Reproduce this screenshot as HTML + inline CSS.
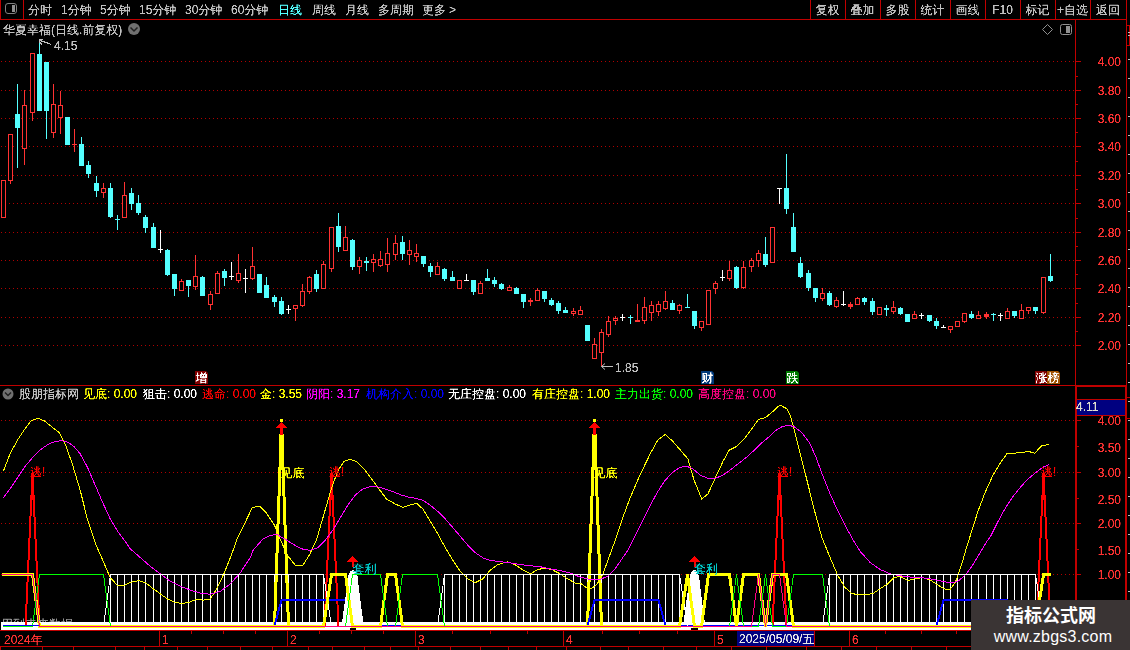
<!DOCTYPE html>
<html><head><meta charset="utf-8"><title>chart</title>
<style>html,body{margin:0;padding:0;background:#000;overflow:hidden}body{width:1130px;height:650px;position:relative}svg text{font-family:"Liberation Sans","WenQuanYi Zen Hei",sans-serif;font-size:12px}</style>
</head><body>
<svg width="1130" height="650" viewBox="0 0 1130 650" style="position:absolute;left:0;top:0">
<rect width="1130" height="650" fill="#000"/>
<defs><filter id="sh" x="-5%" y="-20%" width="110%" height="140%" color-interpolation-filters="sRGB"><feComponentTransfer><feFuncA type="linear" slope="2.2" intercept="-0.35"/></feComponentTransfer></filter></defs>
<g shape-rendering="crispEdges">
<line x1="1" x2="1075" y1="61.5" y2="61.5" stroke="#B00000" stroke-width="1" stroke-dasharray="1 3"/>
<line x1="1" x2="1075" y1="90.5" y2="90.5" stroke="#B00000" stroke-width="1" stroke-dasharray="1 3"/>
<line x1="1" x2="1075" y1="118.5" y2="118.5" stroke="#B00000" stroke-width="1" stroke-dasharray="1 3"/>
<line x1="1" x2="1075" y1="146.5" y2="146.5" stroke="#B00000" stroke-width="1" stroke-dasharray="1 3"/>
<line x1="1" x2="1075" y1="175.5" y2="175.5" stroke="#B00000" stroke-width="1" stroke-dasharray="1 3"/>
<line x1="1" x2="1075" y1="203.5" y2="203.5" stroke="#B00000" stroke-width="1" stroke-dasharray="1 3"/>
<line x1="1" x2="1075" y1="232.5" y2="232.5" stroke="#B00000" stroke-width="1" stroke-dasharray="1 3"/>
<line x1="1" x2="1075" y1="260.5" y2="260.5" stroke="#B00000" stroke-width="1" stroke-dasharray="1 3"/>
<line x1="1" x2="1075" y1="288.5" y2="288.5" stroke="#B00000" stroke-width="1" stroke-dasharray="1 3"/>
<line x1="1" x2="1075" y1="317.5" y2="317.5" stroke="#B00000" stroke-width="1" stroke-dasharray="1 3"/>
<line x1="1" x2="1075" y1="345.5" y2="345.5" stroke="#B00000" stroke-width="1" stroke-dasharray="1 3"/>
<line x1="1" x2="1075" y1="420.5" y2="420.5" stroke="#B00000" stroke-width="1" stroke-dasharray="1 3"/>
<line x1="1" x2="1075" y1="472.5" y2="472.5" stroke="#B00000" stroke-width="1" stroke-dasharray="1 3"/>
<line x1="1" x2="1075" y1="523.5" y2="523.5" stroke="#B00000" stroke-width="1" stroke-dasharray="1 3"/>
<line x1="1" x2="1075" y1="574.5" y2="574.5" stroke="#B00000" stroke-width="1" stroke-dasharray="1 3"/>
<rect x="3" y="180" width="1" height="0" fill="#FF3232"/>
<rect x="3" y="217" width="1" height="1" fill="#FF3232"/>
<rect x="1.5" y="180.5" width="4" height="37" fill="#000" stroke="#FF3232" stroke-width="1"/>
<rect x="10" y="134" width="1" height="0" fill="#FF3232"/>
<rect x="10" y="180" width="1" height="4" fill="#FF3232"/>
<rect x="8.5" y="134.5" width="4" height="46" fill="#000" stroke="#FF3232" stroke-width="1"/>
<rect x="17" y="84" width="1" height="84" fill="#54FFFF"/>
<rect x="15" y="114" width="5" height="14" fill="#54FFFF"/>
<rect x="24" y="90" width="1" height="15" fill="#FF3232"/>
<rect x="24" y="148" width="1" height="17" fill="#FF3232"/>
<rect x="22.5" y="105.5" width="4" height="43" fill="#000" stroke="#FF3232" stroke-width="1"/>
<rect x="32" y="53" width="1" height="0" fill="#FF3232"/>
<rect x="32" y="112" width="1" height="9" fill="#FF3232"/>
<rect x="30.5" y="53.5" width="4" height="59" fill="#000" stroke="#FF3232" stroke-width="1"/>
<rect x="39" y="40" width="1" height="71" fill="#54FFFF"/>
<rect x="37" y="54" width="5" height="57" fill="#54FFFF"/>
<rect x="46" y="62" width="1" height="77" fill="#54FFFF"/>
<rect x="44" y="62" width="5" height="49" fill="#54FFFF"/>
<rect x="53" y="84" width="1" height="20" fill="#FF3232"/>
<rect x="53" y="132" width="1" height="6" fill="#FF3232"/>
<rect x="51.5" y="104.5" width="4" height="28" fill="#000" stroke="#FF3232" stroke-width="1"/>
<rect x="60" y="91" width="1" height="14" fill="#FF3232"/>
<rect x="60" y="117" width="1" height="17" fill="#FF3232"/>
<rect x="58.5" y="105.5" width="4" height="12" fill="#000" stroke="#FF3232" stroke-width="1"/>
<rect x="67" y="117" width="1" height="28" fill="#54FFFF"/>
<rect x="65" y="117" width="5" height="28" fill="#54FFFF"/>
<rect x="74" y="129" width="1" height="23" fill="#FF3232"/>
<rect x="72" y="144" width="5" height="1" fill="#FF3232"/>
<rect x="81" y="137" width="1" height="29" fill="#54FFFF"/>
<rect x="79" y="144" width="5" height="22" fill="#54FFFF"/>
<rect x="88" y="161" width="1" height="17" fill="#54FFFF"/>
<rect x="86" y="165" width="5" height="9" fill="#54FFFF"/>
<rect x="96" y="176" width="1" height="21" fill="#54FFFF"/>
<rect x="94" y="183" width="5" height="8" fill="#54FFFF"/>
<rect x="103" y="183" width="1" height="5" fill="#FF3232"/>
<rect x="103" y="192" width="1" height="6" fill="#FF3232"/>
<rect x="101.5" y="188.5" width="4" height="4" fill="#000" stroke="#FF3232" stroke-width="1"/>
<rect x="110" y="183" width="1" height="35" fill="#54FFFF"/>
<rect x="108" y="188" width="5" height="29" fill="#54FFFF"/>
<rect x="117" y="215" width="1" height="15" fill="#54FFFF"/>
<rect x="115" y="219" width="5" height="1" fill="#54FFFF"/>
<rect x="124" y="182" width="1" height="13" fill="#FF3232"/>
<rect x="124" y="217" width="1" height="1" fill="#FF3232"/>
<rect x="122.5" y="195.5" width="4" height="22" fill="#000" stroke="#FF3232" stroke-width="1"/>
<rect x="131" y="188" width="1" height="22" fill="#54FFFF"/>
<rect x="129" y="193" width="5" height="11" fill="#54FFFF"/>
<rect x="138" y="195" width="1" height="20" fill="#54FFFF"/>
<rect x="136" y="203" width="5" height="10" fill="#54FFFF"/>
<rect x="145" y="215" width="1" height="18" fill="#54FFFF"/>
<rect x="143" y="217" width="5" height="11" fill="#54FFFF"/>
<rect x="153" y="223" width="1" height="25" fill="#54FFFF"/>
<rect x="151" y="227" width="5" height="21" fill="#54FFFF"/>
<rect x="160" y="230" width="1" height="23" fill="#FFFFFF"/>
<rect x="158" y="249" width="5" height="1" fill="#FFFFFF"/>
<rect x="167" y="249" width="1" height="27" fill="#54FFFF"/>
<rect x="165" y="250" width="5" height="25" fill="#54FFFF"/>
<rect x="174" y="274" width="1" height="22" fill="#54FFFF"/>
<rect x="172" y="274" width="5" height="15" fill="#54FFFF"/>
<rect x="181" y="279" width="1" height="2" fill="#FF3232"/>
<rect x="181" y="290" width="1" height="1" fill="#FF3232"/>
<rect x="179.5" y="281.5" width="4" height="9" fill="#000" stroke="#FF3232" stroke-width="1"/>
<rect x="188" y="280" width="1" height="17" fill="#54FFFF"/>
<rect x="186" y="280" width="5" height="6" fill="#54FFFF"/>
<rect x="195" y="255" width="1" height="21" fill="#FF3232"/>
<rect x="195" y="286" width="1" height="4" fill="#FF3232"/>
<rect x="193.5" y="276.5" width="4" height="10" fill="#000" stroke="#FF3232" stroke-width="1"/>
<rect x="202" y="276" width="1" height="20" fill="#54FFFF"/>
<rect x="200" y="277" width="5" height="19" fill="#54FFFF"/>
<rect x="210" y="291" width="1" height="3" fill="#FF3232"/>
<rect x="210" y="304" width="1" height="6" fill="#FF3232"/>
<rect x="208.5" y="294.5" width="4" height="10" fill="#000" stroke="#FF3232" stroke-width="1"/>
<rect x="217" y="271" width="1" height="2" fill="#FF3232"/>
<rect x="217" y="293" width="1" height="1" fill="#FF3232"/>
<rect x="215.5" y="273.5" width="4" height="20" fill="#000" stroke="#FF3232" stroke-width="1"/>
<rect x="224" y="269" width="1" height="17" fill="#54FFFF"/>
<rect x="222" y="271" width="5" height="7" fill="#54FFFF"/>
<rect x="231" y="262" width="1" height="18" fill="#FFFFFF"/>
<rect x="229" y="276" width="5" height="1" fill="#FFFFFF"/>
<rect x="238" y="254" width="1" height="19" fill="#FF3232"/>
<rect x="238" y="280" width="1" height="3" fill="#FF3232"/>
<rect x="236.5" y="273.5" width="4" height="7" fill="#000" stroke="#FF3232" stroke-width="1"/>
<rect x="245" y="269" width="1" height="24" fill="#FFFFFF"/>
<rect x="243" y="278" width="5" height="1" fill="#FFFFFF"/>
<rect x="252" y="247" width="1" height="19" fill="#FF3232"/>
<rect x="252" y="278" width="1" height="2" fill="#FF3232"/>
<rect x="250.5" y="266.5" width="4" height="12" fill="#000" stroke="#FF3232" stroke-width="1"/>
<rect x="259" y="274" width="1" height="19" fill="#54FFFF"/>
<rect x="257" y="274" width="5" height="19" fill="#54FFFF"/>
<rect x="266" y="277" width="1" height="21" fill="#54FFFF"/>
<rect x="264" y="285" width="5" height="13" fill="#54FFFF"/>
<rect x="274" y="295" width="1" height="12" fill="#54FFFF"/>
<rect x="272" y="297" width="5" height="5" fill="#54FFFF"/>
<rect x="281" y="297" width="1" height="18" fill="#54FFFF"/>
<rect x="279" y="301" width="5" height="13" fill="#54FFFF"/>
<rect x="288" y="305" width="1" height="9" fill="#FFFFFF"/>
<rect x="286" y="309" width="5" height="1" fill="#FFFFFF"/>
<rect x="295" y="305" width="1" height="0" fill="#FF3232"/>
<rect x="295" y="308" width="1" height="13" fill="#FF3232"/>
<rect x="293.5" y="305.5" width="4" height="3" fill="#000" stroke="#FF3232" stroke-width="1"/>
<rect x="302" y="284" width="1" height="7" fill="#FF3232"/>
<rect x="302" y="305" width="1" height="2" fill="#FF3232"/>
<rect x="300.5" y="291.5" width="4" height="14" fill="#000" stroke="#FF3232" stroke-width="1"/>
<rect x="309" y="276" width="1" height="1" fill="#FF3232"/>
<rect x="309" y="291" width="1" height="3" fill="#FF3232"/>
<rect x="307.5" y="277.5" width="4" height="14" fill="#000" stroke="#FF3232" stroke-width="1"/>
<rect x="316" y="270" width="1" height="22" fill="#54FFFF"/>
<rect x="314" y="274" width="5" height="15" fill="#54FFFF"/>
<rect x="323" y="261" width="1" height="3" fill="#FF3232"/>
<rect x="323" y="288" width="1" height="1" fill="#FF3232"/>
<rect x="321.5" y="264.5" width="4" height="24" fill="#000" stroke="#FF3232" stroke-width="1"/>
<rect x="331" y="227" width="1" height="0" fill="#FF3232"/>
<rect x="331" y="268" width="1" height="4" fill="#FF3232"/>
<rect x="329.5" y="227.5" width="4" height="41" fill="#000" stroke="#FF3232" stroke-width="1"/>
<rect x="338" y="213" width="1" height="39" fill="#54FFFF"/>
<rect x="336" y="226" width="5" height="21" fill="#54FFFF"/>
<rect x="345" y="226" width="1" height="11" fill="#FF3232"/>
<rect x="345" y="250" width="1" height="1" fill="#FF3232"/>
<rect x="343.5" y="237.5" width="4" height="13" fill="#000" stroke="#FF3232" stroke-width="1"/>
<rect x="352" y="239" width="1" height="31" fill="#54FFFF"/>
<rect x="350" y="240" width="5" height="27" fill="#54FFFF"/>
<rect x="359" y="257" width="1" height="3" fill="#FF3232"/>
<rect x="359" y="266" width="1" height="8" fill="#FF3232"/>
<rect x="357.5" y="260.5" width="4" height="6" fill="#000" stroke="#FF3232" stroke-width="1"/>
<rect x="366" y="257" width="1" height="14" fill="#54FFFF"/>
<rect x="364" y="261" width="5" height="2" fill="#54FFFF"/>
<rect x="373" y="254" width="1" height="5" fill="#FF3232"/>
<rect x="373" y="262" width="1" height="10" fill="#FF3232"/>
<rect x="371.5" y="259.5" width="4" height="3" fill="#000" stroke="#FF3232" stroke-width="1"/>
<rect x="380" y="251" width="1" height="8" fill="#FF3232"/>
<rect x="380" y="265" width="1" height="2" fill="#FF3232"/>
<rect x="378.5" y="259.5" width="4" height="6" fill="#000" stroke="#FF3232" stroke-width="1"/>
<rect x="387" y="238" width="1" height="15" fill="#FF3232"/>
<rect x="387" y="264" width="1" height="8" fill="#FF3232"/>
<rect x="385.5" y="253.5" width="4" height="11" fill="#000" stroke="#FF3232" stroke-width="1"/>
<rect x="395" y="235" width="1" height="8" fill="#FF3232"/>
<rect x="395" y="254" width="1" height="6" fill="#FF3232"/>
<rect x="393.5" y="243.5" width="4" height="11" fill="#000" stroke="#FF3232" stroke-width="1"/>
<rect x="402" y="236" width="1" height="24" fill="#54FFFF"/>
<rect x="400" y="242" width="5" height="12" fill="#54FFFF"/>
<rect x="409" y="240" width="1" height="10" fill="#FF3232"/>
<rect x="409" y="254" width="1" height="11" fill="#FF3232"/>
<rect x="407.5" y="250.5" width="4" height="4" fill="#000" stroke="#FF3232" stroke-width="1"/>
<rect x="416" y="244" width="1" height="9" fill="#FF3232"/>
<rect x="416" y="256" width="1" height="6" fill="#FF3232"/>
<rect x="414.5" y="253.5" width="4" height="3" fill="#000" stroke="#FF3232" stroke-width="1"/>
<rect x="423" y="256" width="1" height="11" fill="#54FFFF"/>
<rect x="421" y="256" width="5" height="8" fill="#54FFFF"/>
<rect x="430" y="263" width="1" height="14" fill="#54FFFF"/>
<rect x="428" y="266" width="5" height="6" fill="#54FFFF"/>
<rect x="437" y="262" width="1" height="4" fill="#FF3232"/>
<rect x="437" y="274" width="1" height="1" fill="#FF3232"/>
<rect x="435.5" y="266.5" width="4" height="8" fill="#000" stroke="#FF3232" stroke-width="1"/>
<rect x="444" y="268" width="1" height="13" fill="#54FFFF"/>
<rect x="442" y="269" width="5" height="10" fill="#54FFFF"/>
<rect x="452" y="271" width="1" height="10" fill="#54FFFF"/>
<rect x="450" y="277" width="5" height="4" fill="#54FFFF"/>
<rect x="459" y="280" width="1" height="0" fill="#FF3232"/>
<rect x="459" y="288" width="1" height="1" fill="#FF3232"/>
<rect x="457.5" y="280.5" width="4" height="8" fill="#000" stroke="#FF3232" stroke-width="1"/>
<rect x="466" y="274" width="1" height="7" fill="#FFFFFF"/>
<rect x="464" y="280" width="5" height="1" fill="#FFFFFF"/>
<rect x="473" y="280" width="1" height="15" fill="#54FFFF"/>
<rect x="471" y="280" width="5" height="12" fill="#54FFFF"/>
<rect x="480" y="281" width="1" height="2" fill="#FF3232"/>
<rect x="480" y="293" width="1" height="1" fill="#FF3232"/>
<rect x="478.5" y="283.5" width="4" height="10" fill="#000" stroke="#FF3232" stroke-width="1"/>
<rect x="487" y="269" width="1" height="12" fill="#54FFFF"/>
<rect x="485" y="278" width="5" height="3" fill="#54FFFF"/>
<rect x="494" y="277" width="1" height="10" fill="#54FFFF"/>
<rect x="492" y="280" width="5" height="4" fill="#54FFFF"/>
<rect x="501" y="283" width="1" height="7" fill="#54FFFF"/>
<rect x="499" y="284" width="5" height="5" fill="#54FFFF"/>
<rect x="509" y="285" width="1" height="2" fill="#FF3232"/>
<rect x="509" y="290" width="1" height="1" fill="#FF3232"/>
<rect x="507.5" y="287.5" width="4" height="3" fill="#000" stroke="#FF3232" stroke-width="1"/>
<rect x="516" y="287" width="1" height="7" fill="#54FFFF"/>
<rect x="514" y="288" width="5" height="6" fill="#54FFFF"/>
<rect x="523" y="294" width="1" height="14" fill="#54FFFF"/>
<rect x="521" y="294" width="5" height="8" fill="#54FFFF"/>
<rect x="530" y="298" width="1" height="8" fill="#FF3232"/>
<rect x="528" y="300" width="5" height="2" fill="#FF3232"/>
<rect x="537" y="288" width="1" height="2" fill="#FF3232"/>
<rect x="537" y="300" width="1" height="1" fill="#FF3232"/>
<rect x="535.5" y="290.5" width="4" height="10" fill="#000" stroke="#FF3232" stroke-width="1"/>
<rect x="544" y="291" width="1" height="11" fill="#54FFFF"/>
<rect x="542" y="291" width="5" height="8" fill="#54FFFF"/>
<rect x="551" y="298" width="1" height="8" fill="#54FFFF"/>
<rect x="549" y="300" width="5" height="5" fill="#54FFFF"/>
<rect x="558" y="301" width="1" height="13" fill="#54FFFF"/>
<rect x="556" y="303" width="5" height="8" fill="#54FFFF"/>
<rect x="565" y="307" width="1" height="6" fill="#54FFFF"/>
<rect x="563" y="310" width="5" height="3" fill="#54FFFF"/>
<rect x="573" y="308" width="1" height="3" fill="#FF3232"/>
<rect x="573" y="313" width="1" height="3" fill="#FF3232"/>
<rect x="571.5" y="311.5" width="4" height="2" fill="#000" stroke="#FF3232" stroke-width="1"/>
<rect x="580" y="306" width="1" height="4" fill="#FF3232"/>
<rect x="580" y="314" width="1" height="1" fill="#FF3232"/>
<rect x="578.5" y="310.5" width="4" height="4" fill="#000" stroke="#FF3232" stroke-width="1"/>
<rect x="587" y="325" width="1" height="16" fill="#54FFFF"/>
<rect x="585" y="325" width="5" height="16" fill="#54FFFF"/>
<rect x="594" y="338" width="1" height="6" fill="#FF3232"/>
<rect x="594" y="358" width="1" height="1" fill="#FF3232"/>
<rect x="592.5" y="344.5" width="4" height="14" fill="#000" stroke="#FF3232" stroke-width="1"/>
<rect x="601" y="329" width="1" height="3" fill="#FF3232"/>
<rect x="601" y="352" width="1" height="14" fill="#FF3232"/>
<rect x="599.5" y="332.5" width="4" height="20" fill="#000" stroke="#FF3232" stroke-width="1"/>
<rect x="608" y="316" width="1" height="5" fill="#FF3232"/>
<rect x="608" y="334" width="1" height="3" fill="#FF3232"/>
<rect x="606.5" y="321.5" width="4" height="13" fill="#000" stroke="#FF3232" stroke-width="1"/>
<rect x="615" y="316" width="1" height="2" fill="#FF3232"/>
<rect x="615" y="320" width="1" height="5" fill="#FF3232"/>
<rect x="613.5" y="318.5" width="4" height="2" fill="#000" stroke="#FF3232" stroke-width="1"/>
<rect x="622" y="314" width="1" height="7" fill="#FFFFFF"/>
<rect x="620" y="317" width="5" height="1" fill="#FFFFFF"/>
<rect x="630" y="315" width="1" height="9" fill="#54FFFF"/>
<rect x="628" y="317" width="5" height="1" fill="#54FFFF"/>
<rect x="637" y="304" width="1" height="16" fill="#FF3232"/>
<rect x="637" y="321" width="1" height="1" fill="#FF3232"/>
<rect x="635.5" y="320.5" width="4" height="1" fill="#000" stroke="#FF3232" stroke-width="1"/>
<rect x="644" y="297" width="1" height="10" fill="#FF3232"/>
<rect x="644" y="320" width="1" height="4" fill="#FF3232"/>
<rect x="642.5" y="307.5" width="4" height="13" fill="#000" stroke="#FF3232" stroke-width="1"/>
<rect x="651" y="301" width="1" height="4" fill="#FF3232"/>
<rect x="651" y="312" width="1" height="9" fill="#FF3232"/>
<rect x="649.5" y="305.5" width="4" height="7" fill="#000" stroke="#FF3232" stroke-width="1"/>
<rect x="658" y="301" width="1" height="3" fill="#FF3232"/>
<rect x="658" y="311" width="1" height="5" fill="#FF3232"/>
<rect x="656.5" y="304.5" width="4" height="7" fill="#000" stroke="#FF3232" stroke-width="1"/>
<rect x="665" y="291" width="1" height="10" fill="#FF3232"/>
<rect x="665" y="308" width="1" height="2" fill="#FF3232"/>
<rect x="663.5" y="301.5" width="4" height="7" fill="#000" stroke="#FF3232" stroke-width="1"/>
<rect x="672" y="300" width="1" height="10" fill="#54FFFF"/>
<rect x="670" y="303" width="5" height="7" fill="#54FFFF"/>
<rect x="679" y="304" width="1" height="1" fill="#FF3232"/>
<rect x="679" y="310" width="1" height="4" fill="#FF3232"/>
<rect x="677.5" y="305.5" width="4" height="5" fill="#000" stroke="#FF3232" stroke-width="1"/>
<rect x="687" y="294" width="1" height="14" fill="#54FFFF"/>
<rect x="685" y="307" width="5" height="1" fill="#54FFFF"/>
<rect x="694" y="311" width="1" height="18" fill="#54FFFF"/>
<rect x="692" y="311" width="5" height="15" fill="#54FFFF"/>
<rect x="701" y="321" width="1" height="0" fill="#FF3232"/>
<rect x="701" y="327" width="1" height="4" fill="#FF3232"/>
<rect x="699.5" y="321.5" width="4" height="6" fill="#000" stroke="#FF3232" stroke-width="1"/>
<rect x="708" y="290" width="1" height="0" fill="#FF3232"/>
<rect x="708" y="324" width="1" height="1" fill="#FF3232"/>
<rect x="706.5" y="290.5" width="4" height="34" fill="#000" stroke="#FF3232" stroke-width="1"/>
<rect x="715" y="281" width="1" height="2" fill="#FF3232"/>
<rect x="715" y="288" width="1" height="6" fill="#FF3232"/>
<rect x="713.5" y="283.5" width="4" height="5" fill="#000" stroke="#FF3232" stroke-width="1"/>
<rect x="722" y="270" width="1" height="11" fill="#FFFFFF"/>
<rect x="720" y="277" width="5" height="1" fill="#FFFFFF"/>
<rect x="729" y="261" width="1" height="9" fill="#FF3232"/>
<rect x="729" y="278" width="1" height="3" fill="#FF3232"/>
<rect x="727.5" y="270.5" width="4" height="8" fill="#000" stroke="#FF3232" stroke-width="1"/>
<rect x="736" y="266" width="1" height="23" fill="#54FFFF"/>
<rect x="734" y="267" width="5" height="21" fill="#54FFFF"/>
<rect x="743" y="261" width="1" height="6" fill="#FF3232"/>
<rect x="743" y="287" width="1" height="2" fill="#FF3232"/>
<rect x="741.5" y="267.5" width="4" height="20" fill="#000" stroke="#FF3232" stroke-width="1"/>
<rect x="751" y="258" width="1" height="2" fill="#FF3232"/>
<rect x="751" y="266" width="1" height="6" fill="#FF3232"/>
<rect x="749.5" y="260.5" width="4" height="6" fill="#000" stroke="#FF3232" stroke-width="1"/>
<rect x="758" y="250" width="1" height="3" fill="#FF3232"/>
<rect x="758" y="260" width="1" height="7" fill="#FF3232"/>
<rect x="756.5" y="253.5" width="4" height="7" fill="#000" stroke="#FF3232" stroke-width="1"/>
<rect x="765" y="237" width="1" height="30" fill="#54FFFF"/>
<rect x="763" y="254" width="5" height="11" fill="#54FFFF"/>
<rect x="772" y="227" width="1" height="0" fill="#FF3232"/>
<rect x="772" y="262" width="1" height="1" fill="#FF3232"/>
<rect x="770.5" y="227.5" width="4" height="35" fill="#000" stroke="#FF3232" stroke-width="1"/>
<rect x="779" y="188" width="1" height="16" fill="#FFFFFF"/>
<rect x="777" y="188" width="5" height="1" fill="#FFFFFF"/>
<rect x="786" y="154" width="1" height="60" fill="#54FFFF"/>
<rect x="784" y="188" width="5" height="21" fill="#54FFFF"/>
<rect x="793" y="213" width="1" height="39" fill="#54FFFF"/>
<rect x="791" y="227" width="5" height="25" fill="#54FFFF"/>
<rect x="800" y="257" width="1" height="21" fill="#54FFFF"/>
<rect x="798" y="263" width="5" height="14" fill="#54FFFF"/>
<rect x="808" y="270" width="1" height="21" fill="#54FFFF"/>
<rect x="806" y="273" width="5" height="15" fill="#54FFFF"/>
<rect x="815" y="288" width="1" height="14" fill="#54FFFF"/>
<rect x="813" y="288" width="5" height="10" fill="#54FFFF"/>
<rect x="822" y="288" width="1" height="5" fill="#FF3232"/>
<rect x="822" y="298" width="1" height="3" fill="#FF3232"/>
<rect x="820.5" y="293.5" width="4" height="5" fill="#000" stroke="#FF3232" stroke-width="1"/>
<rect x="829" y="291" width="1" height="15" fill="#54FFFF"/>
<rect x="827" y="293" width="5" height="12" fill="#54FFFF"/>
<rect x="836" y="297" width="1" height="3" fill="#FF3232"/>
<rect x="836" y="306" width="1" height="2" fill="#FF3232"/>
<rect x="834.5" y="300.5" width="4" height="6" fill="#000" stroke="#FF3232" stroke-width="1"/>
<rect x="843" y="291" width="1" height="15" fill="#FFFFFF"/>
<rect x="841" y="304" width="5" height="1" fill="#FFFFFF"/>
<rect x="850" y="302" width="1" height="7" fill="#FF3232"/>
<rect x="848" y="304" width="5" height="3" fill="#FF3232"/>
<rect x="857" y="297" width="1" height="1" fill="#FF3232"/>
<rect x="857" y="304" width="1" height="1" fill="#FF3232"/>
<rect x="855.5" y="298.5" width="4" height="6" fill="#000" stroke="#FF3232" stroke-width="1"/>
<rect x="864" y="297" width="1" height="8" fill="#54FFFF"/>
<rect x="862" y="298" width="5" height="4" fill="#54FFFF"/>
<rect x="872" y="298" width="1" height="17" fill="#54FFFF"/>
<rect x="870" y="301" width="5" height="11" fill="#54FFFF"/>
<rect x="879" y="307" width="1" height="0" fill="#FF3232"/>
<rect x="879" y="314" width="1" height="1" fill="#FF3232"/>
<rect x="877.5" y="307.5" width="4" height="7" fill="#000" stroke="#FF3232" stroke-width="1"/>
<rect x="886" y="305" width="1" height="11" fill="#54FFFF"/>
<rect x="884" y="308" width="5" height="2" fill="#54FFFF"/>
<rect x="893" y="301" width="1" height="6" fill="#FF3232"/>
<rect x="893" y="311" width="1" height="3" fill="#FF3232"/>
<rect x="891.5" y="307.5" width="4" height="4" fill="#000" stroke="#FF3232" stroke-width="1"/>
<rect x="900" y="307" width="1" height="8" fill="#54FFFF"/>
<rect x="898" y="308" width="5" height="6" fill="#54FFFF"/>
<rect x="907" y="314" width="1" height="8" fill="#54FFFF"/>
<rect x="905" y="314" width="5" height="8" fill="#54FFFF"/>
<rect x="914" y="311" width="1" height="3" fill="#FF3232"/>
<rect x="914" y="318" width="1" height="1" fill="#FF3232"/>
<rect x="912.5" y="314.5" width="4" height="4" fill="#000" stroke="#FF3232" stroke-width="1"/>
<rect x="921" y="313" width="1" height="6" fill="#FFFFFF"/>
<rect x="919" y="315" width="5" height="1" fill="#FFFFFF"/>
<rect x="929" y="315" width="1" height="7" fill="#54FFFF"/>
<rect x="927" y="315" width="5" height="6" fill="#54FFFF"/>
<rect x="936" y="318" width="1" height="11" fill="#54FFFF"/>
<rect x="934" y="321" width="5" height="5" fill="#54FFFF"/>
<rect x="943" y="325" width="1" height="3" fill="#FFFFFF"/>
<rect x="941" y="327" width="5" height="1" fill="#FFFFFF"/>
<rect x="950" y="326" width="1" height="0" fill="#FF3232"/>
<rect x="950" y="329" width="1" height="4" fill="#FF3232"/>
<rect x="948.5" y="326.5" width="4" height="3" fill="#000" stroke="#FF3232" stroke-width="1"/>
<rect x="957" y="321" width="1" height="0" fill="#FF3232"/>
<rect x="957" y="326" width="1" height="1" fill="#FF3232"/>
<rect x="955.5" y="321.5" width="4" height="5" fill="#000" stroke="#FF3232" stroke-width="1"/>
<rect x="964" y="313" width="1" height="0" fill="#FF3232"/>
<rect x="964" y="321" width="1" height="2" fill="#FF3232"/>
<rect x="962.5" y="313.5" width="4" height="8" fill="#000" stroke="#FF3232" stroke-width="1"/>
<rect x="971" y="311" width="1" height="8" fill="#54FFFF"/>
<rect x="969" y="314" width="5" height="4" fill="#54FFFF"/>
<rect x="978" y="311" width="1" height="4" fill="#FF3232"/>
<rect x="978" y="318" width="1" height="1" fill="#FF3232"/>
<rect x="976.5" y="315.5" width="4" height="3" fill="#000" stroke="#FF3232" stroke-width="1"/>
<rect x="986" y="312" width="1" height="7" fill="#FF3232"/>
<rect x="984" y="314" width="5" height="3" fill="#FF3232"/>
<rect x="993" y="313" width="1" height="8" fill="#54FFFF"/>
<rect x="991" y="314" width="5" height="1" fill="#54FFFF"/>
<rect x="1000" y="313" width="1" height="8" fill="#FFFFFF"/>
<rect x="998" y="315" width="5" height="1" fill="#FFFFFF"/>
<rect x="1007" y="308" width="1" height="3" fill="#FF3232"/>
<rect x="1007" y="318" width="1" height="1" fill="#FF3232"/>
<rect x="1005.5" y="311.5" width="4" height="7" fill="#000" stroke="#FF3232" stroke-width="1"/>
<rect x="1014" y="311" width="1" height="7" fill="#54FFFF"/>
<rect x="1012" y="311" width="5" height="5" fill="#54FFFF"/>
<rect x="1021" y="304" width="1" height="6" fill="#FF3232"/>
<rect x="1021" y="318" width="1" height="1" fill="#FF3232"/>
<rect x="1019.5" y="310.5" width="4" height="8" fill="#000" stroke="#FF3232" stroke-width="1"/>
<rect x="1028" y="307" width="1" height="0" fill="#FF3232"/>
<rect x="1028" y="310" width="1" height="4" fill="#FF3232"/>
<rect x="1026.5" y="307.5" width="4" height="3" fill="#000" stroke="#FF3232" stroke-width="1"/>
<rect x="1035" y="307" width="1" height="7" fill="#54FFFF"/>
<rect x="1033" y="307" width="5" height="4" fill="#54FFFF"/>
<rect x="1043" y="277" width="1" height="0" fill="#FF3232"/>
<rect x="1043" y="312" width="1" height="2" fill="#FF3232"/>
<rect x="1041.5" y="277.5" width="4" height="35" fill="#000" stroke="#FF3232" stroke-width="1"/>
<rect x="1050" y="254" width="1" height="28" fill="#54FFFF"/>
<rect x="1048" y="276" width="5" height="5" fill="#54FFFF"/>
</g>
<rect x="1" y="622" width="1074" height="8" fill="#FFFFFF" shape-rendering="crispEdges"/>
<g shape-rendering="crispEdges">
<rect x="110" y="574" width="1" height="49" fill="#FFFFFF"/>
<rect x="117" y="574" width="1" height="49" fill="#FFFFFF"/>
<rect x="124" y="574" width="1" height="49" fill="#FFFFFF"/>
<rect x="131" y="574" width="1" height="49" fill="#FFFFFF"/>
<rect x="138" y="574" width="1" height="49" fill="#FFFFFF"/>
<rect x="145" y="574" width="1" height="49" fill="#FFFFFF"/>
<rect x="153" y="574" width="1" height="49" fill="#FFFFFF"/>
<rect x="160" y="574" width="1" height="49" fill="#FFFFFF"/>
<rect x="167" y="574" width="1" height="49" fill="#FFFFFF"/>
<rect x="174" y="574" width="1" height="49" fill="#FFFFFF"/>
<rect x="181" y="574" width="1" height="49" fill="#FFFFFF"/>
<rect x="188" y="574" width="1" height="49" fill="#FFFFFF"/>
<rect x="195" y="574" width="1" height="49" fill="#FFFFFF"/>
<rect x="202" y="574" width="1" height="49" fill="#FFFFFF"/>
<rect x="210" y="574" width="1" height="49" fill="#FFFFFF"/>
<rect x="217" y="574" width="1" height="49" fill="#FFFFFF"/>
<rect x="224" y="574" width="1" height="49" fill="#FFFFFF"/>
<rect x="231" y="574" width="1" height="49" fill="#FFFFFF"/>
<rect x="238" y="574" width="1" height="49" fill="#FFFFFF"/>
<rect x="245" y="574" width="1" height="49" fill="#FFFFFF"/>
<rect x="252" y="574" width="1" height="49" fill="#FFFFFF"/>
<rect x="259" y="574" width="1" height="49" fill="#FFFFFF"/>
<rect x="266" y="574" width="1" height="49" fill="#FFFFFF"/>
<rect x="274" y="574" width="1" height="49" fill="#FFFFFF"/>
<rect x="281" y="574" width="1" height="49" fill="#FFFFFF"/>
<rect x="288" y="574" width="1" height="49" fill="#FFFFFF"/>
<rect x="295" y="574" width="1" height="49" fill="#FFFFFF"/>
<rect x="302" y="574" width="1" height="49" fill="#FFFFFF"/>
<rect x="309" y="574" width="1" height="49" fill="#FFFFFF"/>
<rect x="316" y="574" width="1" height="49" fill="#FFFFFF"/>
<rect x="323" y="574" width="1" height="49" fill="#FFFFFF"/>
<rect x="110" y="574" width="214" height="1" fill="#FFFFFF"/>
<rect x="444" y="574" width="1" height="49" fill="#FFFFFF"/>
<rect x="452" y="574" width="1" height="49" fill="#FFFFFF"/>
<rect x="459" y="574" width="1" height="49" fill="#FFFFFF"/>
<rect x="466" y="574" width="1" height="49" fill="#FFFFFF"/>
<rect x="473" y="574" width="1" height="49" fill="#FFFFFF"/>
<rect x="480" y="574" width="1" height="49" fill="#FFFFFF"/>
<rect x="487" y="574" width="1" height="49" fill="#FFFFFF"/>
<rect x="494" y="574" width="1" height="49" fill="#FFFFFF"/>
<rect x="501" y="574" width="1" height="49" fill="#FFFFFF"/>
<rect x="509" y="574" width="1" height="49" fill="#FFFFFF"/>
<rect x="516" y="574" width="1" height="49" fill="#FFFFFF"/>
<rect x="523" y="574" width="1" height="49" fill="#FFFFFF"/>
<rect x="530" y="574" width="1" height="49" fill="#FFFFFF"/>
<rect x="537" y="574" width="1" height="49" fill="#FFFFFF"/>
<rect x="544" y="574" width="1" height="49" fill="#FFFFFF"/>
<rect x="551" y="574" width="1" height="49" fill="#FFFFFF"/>
<rect x="558" y="574" width="1" height="49" fill="#FFFFFF"/>
<rect x="565" y="574" width="1" height="49" fill="#FFFFFF"/>
<rect x="573" y="574" width="1" height="49" fill="#FFFFFF"/>
<rect x="580" y="574" width="1" height="49" fill="#FFFFFF"/>
<rect x="587" y="574" width="1" height="49" fill="#FFFFFF"/>
<rect x="594" y="574" width="1" height="49" fill="#FFFFFF"/>
<rect x="601" y="574" width="1" height="49" fill="#FFFFFF"/>
<rect x="608" y="574" width="1" height="49" fill="#FFFFFF"/>
<rect x="615" y="574" width="1" height="49" fill="#FFFFFF"/>
<rect x="622" y="574" width="1" height="49" fill="#FFFFFF"/>
<rect x="630" y="574" width="1" height="49" fill="#FFFFFF"/>
<rect x="637" y="574" width="1" height="49" fill="#FFFFFF"/>
<rect x="644" y="574" width="1" height="49" fill="#FFFFFF"/>
<rect x="651" y="574" width="1" height="49" fill="#FFFFFF"/>
<rect x="658" y="574" width="1" height="49" fill="#FFFFFF"/>
<rect x="665" y="574" width="1" height="49" fill="#FFFFFF"/>
<rect x="672" y="574" width="1" height="49" fill="#FFFFFF"/>
<rect x="679" y="574" width="1" height="49" fill="#FFFFFF"/>
<rect x="444" y="574" width="236" height="1" fill="#FFFFFF"/>
<rect x="829" y="574" width="1" height="49" fill="#FFFFFF"/>
<rect x="836" y="574" width="1" height="49" fill="#FFFFFF"/>
<rect x="843" y="574" width="1" height="49" fill="#FFFFFF"/>
<rect x="850" y="574" width="1" height="49" fill="#FFFFFF"/>
<rect x="857" y="574" width="1" height="49" fill="#FFFFFF"/>
<rect x="864" y="574" width="1" height="49" fill="#FFFFFF"/>
<rect x="872" y="574" width="1" height="49" fill="#FFFFFF"/>
<rect x="879" y="574" width="1" height="49" fill="#FFFFFF"/>
<rect x="886" y="574" width="1" height="49" fill="#FFFFFF"/>
<rect x="893" y="574" width="1" height="49" fill="#FFFFFF"/>
<rect x="900" y="574" width="1" height="49" fill="#FFFFFF"/>
<rect x="907" y="574" width="1" height="49" fill="#FFFFFF"/>
<rect x="914" y="574" width="1" height="49" fill="#FFFFFF"/>
<rect x="921" y="574" width="1" height="49" fill="#FFFFFF"/>
<rect x="929" y="574" width="1" height="49" fill="#FFFFFF"/>
<rect x="936" y="574" width="1" height="49" fill="#FFFFFF"/>
<rect x="943" y="574" width="1" height="49" fill="#FFFFFF"/>
<rect x="950" y="574" width="1" height="49" fill="#FFFFFF"/>
<rect x="957" y="574" width="1" height="49" fill="#FFFFFF"/>
<rect x="964" y="574" width="1" height="49" fill="#FFFFFF"/>
<rect x="971" y="574" width="1" height="49" fill="#FFFFFF"/>
<rect x="978" y="574" width="1" height="49" fill="#FFFFFF"/>
<rect x="986" y="574" width="1" height="49" fill="#FFFFFF"/>
<rect x="993" y="574" width="1" height="49" fill="#FFFFFF"/>
<rect x="1000" y="574" width="1" height="49" fill="#FFFFFF"/>
<rect x="1007" y="574" width="1" height="49" fill="#FFFFFF"/>
<rect x="1014" y="574" width="1" height="49" fill="#FFFFFF"/>
<rect x="1021" y="574" width="1" height="49" fill="#FFFFFF"/>
<rect x="1028" y="574" width="1" height="49" fill="#FFFFFF"/>
<rect x="1035" y="574" width="1" height="49" fill="#FFFFFF"/>
<rect x="829" y="574" width="207" height="1" fill="#FFFFFF"/>
</g>
<polyline points="274.5,626.0 281.5,424.0 288.5,626.0" fill="none" stroke="#FFFF00" stroke-width="3" stroke-linejoin="miter" shape-rendering="crispEdges" />
<rect x="279" y="434" width="5" height="36" fill="#FFFF00"/>
<polyline points="587.5,626.0 594.5,424.0 601.5,626.0" fill="none" stroke="#FFFF00" stroke-width="3" stroke-linejoin="miter" shape-rendering="crispEdges" />
<rect x="592" y="434" width="5" height="36" fill="#FFFF00"/>
<polyline points="25.5,626.0 32.5,473.0 39.5,626.0" fill="none" stroke="#FF0000" stroke-width="2" stroke-linejoin="miter" shape-rendering="crispEdges" />
<rect x="31" y="473" width="3" height="27" fill="#FF0000"/>
<polyline points="324.5,626.0 331.5,473.0 338.5,626.0" fill="none" stroke="#FF0000" stroke-width="2" stroke-linejoin="miter" shape-rendering="crispEdges" />
<rect x="330" y="473" width="3" height="27" fill="#FF0000"/>
<polyline points="772.5,626.0 779.5,473.0 786.5,626.0" fill="none" stroke="#FF0000" stroke-width="2" stroke-linejoin="miter" shape-rendering="crispEdges" />
<rect x="778" y="473" width="3" height="27" fill="#FF0000"/>
<polyline points="1036.5,626.0 1043.5,473.0 1050.5,626.0" fill="none" stroke="#FF0000" stroke-width="2" stroke-linejoin="miter" shape-rendering="crispEdges" />
<rect x="1042" y="473" width="3" height="27" fill="#FF0000"/>
<polyline points="3.3,471.4 10.0,453.9 17.5,440.1 25.0,428.8 31.3,420.6 38.1,418.3 45.1,421.3 52.6,427.6 59.4,432.6 65.7,445.1 72.7,465.2 80.2,490.2 87.7,520.3 95.2,542.9 102.8,560.4 110.2,577.6 117.7,585.6 124.5,585.1 131.5,582.1 138.5,580.6 145.5,582.6 153.3,588.8 160.3,593.8 167.3,598.9 174.5,602.1 181.6,603.4 188.6,602.6 195.6,599.6 203.4,600.1 210.4,598.9 217.4,587.6 224.4,572.6 231.4,555.0 236.7,540.0 252.4,507.4 259.6,506.3 266.8,513.5 274.5,525.3 281.5,542.3 288.5,556.7 295.6,565.6 302.6,565.6 309.6,554.7 316.8,539.0 323.8,514.8 331.5,488.0 337.7,471.4 343.9,461.4 350.2,459.4 356.5,461.4 364.0,468.9 371.5,478.9 379.0,489.0 386.5,499.0 395.3,504.0 402.8,507.3 409.1,505.3 416.6,503.3 422.9,509.0 430.4,521.6 437.9,534.1 445.4,547.9 453.0,560.4 460.3,571.3 467.8,578.8 475.4,582.6 482.9,578.8 490.4,570.0 497.9,564.5 507.9,561.8 515.4,565.0 522.9,570.0 530.5,573.8 538.0,569.5 545.5,568.0 552.7,570.0 560.0,573.8 567.5,578.8 575.0,583.0 581.3,583.8 586.3,587.6 591.3,588.8 596.3,585.0 602.6,575.0 608.9,557.5 615.2,540.4 622.7,517.8 630.2,497.7 637.7,480.2 645.3,463.9 651.5,451.4 657.8,440.1 665.3,434.3 672.8,441.4 680.4,450.1 687.9,458.9 694.1,480.2 701.7,499.0 707.9,494.0 715.4,477.7 723.0,461.4 729.2,450.1 736.7,446.4 744.3,438.8 751.8,428.8 758.5,419.3 765.6,417.5 773.1,411.3 779.8,405.0 786.9,408.8 790.6,416.3 795.6,435.1 801.9,460.2 808.2,485.2 814.4,510.3 822.0,537.8 830.1,557.5 837.6,575.0 845.1,587.6 851.3,593.0 857.6,595.0 865.1,594.3 872.6,593.8 880.1,588.8 887.7,583.8 893.9,577.6 900.2,576.3 907.7,580.6 915.2,578.8 922.7,577.6 930.2,580.0 937.7,585.0 945.3,589.3 950.3,589.3 955.3,582.6 961.5,565.0 966.5,547.5 970.4,535.3 977.9,511.5 985.5,491.5 993.0,475.2 1000.5,462.7 1006.8,453.9 1014.3,453.1 1021.8,452.6 1028.1,451.4 1034.8,453.1 1041.9,445.6 1049.4,444.4" fill="none" stroke="#FFFF00" stroke-width="1" stroke-linejoin="miter" shape-rendering="crispEdges" />
<polyline points="3.3,497.7 10.0,489.0 17.5,477.7 25.0,466.4 32.6,457.6 40.1,450.1 47.6,444.6 53.9,441.9 61.4,440.6 67.7,442.1 73.9,446.4 80.2,453.9 87.7,467.7 95.2,485.2 102.8,502.8 110.3,519.0 117.8,531.6 125.3,541.6 130.2,548.8 140.2,557.5 150.3,566.3 160.3,573.8 170.3,581.3 180.3,586.3 190.3,590.1 200.4,593.1 210.4,594.3 220.4,591.3 230.4,583.8 240.4,572.6 250.4,557.5 253.0,550.4 263.0,539.0 270.7,535.3 277.0,534.6 285.0,539.1 295.0,545.4 302.6,549.1 310.1,550.4 317.6,547.9 325.1,540.4 332.7,530.3 340.2,517.8 347.7,505.3 355.2,495.2 362.7,489.0 370.3,486.7 377.8,487.0 385.3,489.0 392.8,491.5 400.3,494.7 409.1,497.2 416.6,498.5 422.9,500.3 430.4,505.3 437.9,511.5 445.4,519.0 453.0,527.8 460.5,536.6 468.0,545.4 475.5,552.9 483.0,557.9 490.6,560.4 500.6,561.7 510.6,563.0 520.4,564.5 530.5,565.8 540.5,566.8 550.0,568.8 560.0,570.5 570.0,573.0 580.0,577.0 590.0,579.5 598.9,580.0 607.6,576.3 615.1,568.8 620.2,561.5 627.7,550.4 635.2,535.3 642.8,520.3 650.3,505.3 657.8,491.5 665.3,480.2 672.8,472.2 680.4,467.2 686.6,466.2 692.9,468.9 700.4,475.2 707.9,478.4 715.4,478.2 723.0,475.2 730.5,469.7 738.0,463.9 745.5,458.1 753.0,451.4 760.6,443.9 768.1,437.6 775.6,430.6 781.9,426.8 788.1,425.1 794.4,426.8 801.9,432.6 809.4,442.6 815.7,456.4 822.6,475.2 830.1,494.0 837.6,510.3 845.1,525.3 852.6,539.1 860.1,551.3 870.1,562.5 880.1,569.5 890.2,573.8 900.2,575.8 910.2,577.0 920.2,577.6 930.2,578.8 940.2,580.8 950.3,583.0 957.8,581.3 965.3,575.0 972.8,565.0 980.3,552.5 987.8,540.0 990.5,536.6 998.0,521.6 1005.5,507.8 1013.0,496.5 1020.6,487.0 1028.1,478.9 1035.6,472.7 1043.1,467.2 1049.4,464.4" fill="none" stroke="#FF00FF" stroke-width="1" stroke-linejoin="miter" shape-rendering="crispEdges" />
<polyline points="2.0,626.0 3.5,626.0 10.5,626.0 17.5,626.0 24.5,626.0 32.5,626.0 39.5,626.0 46.5,626.0 53.5,626.0 60.5,626.0 67.5,626.0 74.5,626.0 81.5,626.0 88.5,626.0 96.5,626.0 103.5,626.0 110.5,626.0 117.5,626.0 124.5,626.0 131.5,626.0 138.5,626.0 145.5,626.0 153.5,626.0 160.5,626.0 167.5,626.0 174.5,626.0 181.5,626.0 188.5,626.0 195.5,626.0 202.5,626.0 210.5,626.0 217.5,626.0 224.5,626.0 231.5,626.0 238.5,626.0 245.5,626.0 252.5,626.0 259.5,626.0 266.5,626.0 274.5,626.0 281.5,600.0 288.5,600.0 295.5,600.0 302.5,600.0 309.5,600.0 316.5,600.0 323.5,600.0 331.5,600.0 338.5,600.0 345.5,600.0 352.5,626.0 359.5,626.0 366.5,626.0 373.5,626.0 380.5,626.0 387.5,626.0 395.5,626.0 402.5,626.0 409.5,626.0 416.5,626.0 423.5,626.0 430.5,626.0 437.5,626.0 444.5,626.0 452.5,626.0 459.5,626.0 466.5,626.0 473.5,626.0 480.5,626.0 487.5,626.0 494.5,626.0 501.5,626.0 509.5,626.0 516.5,626.0 523.5,626.0 530.5,626.0 537.5,626.0 544.5,626.0 551.5,626.0 558.5,626.0 565.5,626.0 573.5,626.0 580.5,626.0 587.5,626.0 594.5,600.0 601.5,600.0 608.5,600.0 615.5,600.0 622.5,600.0 630.5,600.0 637.5,600.0 644.5,600.0 651.5,600.0 658.5,600.0 665.5,626.0 672.5,626.0 679.5,626.0 687.5,626.0 694.5,626.0 701.5,626.0 708.5,626.0 715.5,626.0 722.5,626.0 729.5,626.0 736.5,626.0 743.5,626.0 751.5,626.0 758.5,626.0 765.5,626.0 772.5,626.0 779.5,626.0 786.5,626.0 793.5,626.0 800.5,626.0 808.5,626.0 815.5,626.0 822.5,626.0 829.5,626.0 836.5,626.0 843.5,626.0 850.5,626.0 857.5,626.0 864.5,626.0 872.5,626.0 879.5,626.0 886.5,626.0 893.5,626.0 900.5,626.0 907.5,626.0 914.5,626.0 921.5,626.0 929.5,626.0 936.5,626.0 943.5,600.0 950.5,600.0 957.5,600.0 964.5,600.0 971.5,600.0 978.5,600.0 986.5,600.0 993.5,600.0 1000.5,600.0 1007.5,600.0 1014.5,626.0 1021.5,626.0 1028.5,626.0 1035.5,626.0 1043.5,626.0 1050.5,626.0" fill="none" stroke="#0000FF" stroke-width="2" stroke-linejoin="miter" shape-rendering="crispEdges" />
<polyline points="2.0,626.5 3.5,626.5 10.5,626.5 17.5,626.5 24.5,626.5 32.5,626.5 39.5,626.5 46.5,626.5 53.5,626.5 60.5,626.5 67.5,626.5 74.5,626.5 81.5,626.5 88.5,626.5 96.5,626.5 103.5,626.5 110.5,574.5 117.5,574.5 124.5,574.5 131.5,574.5 138.5,574.5 145.5,574.5 153.5,574.5 160.5,574.5 167.5,574.5 174.5,574.5 181.5,574.5 188.5,574.5 195.5,574.5 202.5,574.5 210.5,574.5 217.5,574.5 224.5,574.5 231.5,574.5 238.5,574.5 245.5,574.5 252.5,574.5 259.5,574.5 266.5,574.5 274.5,574.5 281.5,574.5 288.5,574.5 295.5,574.5 302.5,574.5 309.5,574.5 316.5,574.5 323.5,574.5 331.5,626.5 338.5,626.5 345.5,626.5 352.5,574.5 359.5,626.5 366.5,626.5 373.5,626.5 380.5,626.5 387.5,626.5 395.5,626.5 402.5,626.5 409.5,626.5 416.5,626.5 423.5,626.5 430.5,626.5 437.5,626.5 444.5,574.5 452.5,574.5 459.5,574.5 466.5,574.5 473.5,574.5 480.5,574.5 487.5,574.5 494.5,574.5 501.5,574.5 509.5,574.5 516.5,574.5 523.5,574.5 530.5,574.5 537.5,574.5 544.5,574.5 551.5,574.5 558.5,574.5 565.5,574.5 573.5,574.5 580.5,574.5 587.5,574.5 594.5,574.5 601.5,574.5 608.5,574.5 615.5,574.5 622.5,574.5 630.5,574.5 637.5,574.5 644.5,574.5 651.5,574.5 658.5,574.5 665.5,574.5 672.5,574.5 679.5,574.5 687.5,626.5 694.5,574.5 701.5,626.5 708.5,626.5 715.5,626.5 722.5,626.5 729.5,626.5 736.5,626.5 743.5,626.5 751.5,626.5 758.5,626.5 765.5,626.5 772.5,626.5 779.5,626.5 786.5,626.5 793.5,626.5 800.5,626.5 808.5,626.5 815.5,626.5 822.5,626.5 829.5,574.5 836.5,574.5 843.5,574.5 850.5,574.5 857.5,574.5 864.5,574.5 872.5,574.5 879.5,574.5 886.5,574.5 893.5,574.5 900.5,574.5 907.5,574.5 914.5,574.5 921.5,574.5 929.5,574.5 936.5,574.5 943.5,574.5 950.5,574.5 957.5,574.5 964.5,574.5 971.5,574.5 978.5,574.5 986.5,574.5 993.5,574.5 1000.5,574.5 1007.5,574.5 1014.5,574.5 1021.5,574.5 1028.5,574.5 1035.5,574.5 1043.5,626.5 1050.5,626.5" fill="none" stroke="#FFFFFF" stroke-width="1" stroke-linejoin="miter" shape-rendering="crispEdges" />
<polygon points="342,623 343.5,611 346,593 348.5,575 350.5,571 353,570 355.5,571 357.5,576 359.5,593 361.5,609 363.5,623" fill="#FFFFFF" shape-rendering="crispEdges"/>
<polygon points="683.5,623 685.0,611 687.5,593 690.0,575 692.0,571 694.5,570 697.0,571 699.0,576 701.0,593 703.0,609 705.0,623" fill="#FFFFFF" shape-rendering="crispEdges"/>
<polyline points="2.0,574.5 3.5,574.5 10.5,574.5 17.5,574.5 24.5,574.5 32.5,574.5 39.5,626.5 46.5,626.5 53.5,626.5 60.5,626.5 67.5,626.5 74.5,626.5 81.5,626.5 88.5,626.5 96.5,626.5 103.5,626.5 110.5,626.5 117.5,626.5 124.5,626.5 131.5,626.5 138.5,626.5 145.5,626.5 153.5,626.5 160.5,626.5 167.5,626.5 174.5,626.5 181.5,626.5 188.5,626.5 195.5,626.5 202.5,626.5 210.5,626.5 217.5,626.5 224.5,626.5 231.5,626.5 238.5,626.5 245.5,626.5 252.5,626.5 259.5,626.5 266.5,626.5 274.5,626.5 281.5,626.5 288.5,626.5 295.5,626.5 302.5,626.5 309.5,626.5 316.5,626.5 323.5,626.5 331.5,574.5 338.5,574.5 345.5,574.5 352.5,626.5 359.5,626.5 366.5,626.5 373.5,626.5 380.5,626.5 387.5,574.5 395.5,574.5 402.5,626.5 409.5,626.5 416.5,626.5 423.5,626.5 430.5,626.5 437.5,626.5 444.5,626.5 452.5,626.5 459.5,626.5 466.5,626.5 473.5,626.5 480.5,626.5 487.5,626.5 494.5,626.5 501.5,626.5 509.5,626.5 516.5,626.5 523.5,626.5 530.5,626.5 537.5,626.5 544.5,626.5 551.5,626.5 558.5,626.5 565.5,626.5 573.5,626.5 580.5,626.5 587.5,626.5 594.5,626.5 601.5,626.5 608.5,626.5 615.5,626.5 622.5,626.5 630.5,626.5 637.5,626.5 644.5,626.5 651.5,626.5 658.5,626.5 665.5,626.5 672.5,626.5 679.5,626.5 687.5,574.5 694.5,626.5 701.5,626.5 708.5,574.5 715.5,574.5 722.5,574.5 729.5,574.5 736.5,626.5 743.5,574.5 751.5,574.5 758.5,574.5 765.5,626.5 772.5,574.5 779.5,574.5 786.5,574.5 793.5,626.5 800.5,626.5 808.5,626.5 815.5,626.5 822.5,626.5 829.5,626.5 836.5,626.5 843.5,626.5 850.5,626.5 857.5,626.5 864.5,626.5 872.5,626.5 879.5,626.5 886.5,626.5 893.5,626.5 900.5,626.5 907.5,626.5 914.5,626.5 921.5,626.5 929.5,626.5 936.5,626.5 943.5,626.5 950.5,626.5 957.5,626.5 964.5,626.5 971.5,626.5 978.5,626.5 986.5,626.5 993.5,626.5 1000.5,626.5 1007.5,626.5 1014.5,626.5 1021.5,626.5 1028.5,626.5 1035.5,626.5 1043.5,574.5 1050.5,574.5" fill="none" stroke="#FFFF00" stroke-width="3" stroke-linejoin="miter" shape-rendering="crispEdges" />
<polyline points="2.0,626.5 3.5,626.5 10.5,626.5 17.5,626.5 24.5,626.5 32.5,626.5 39.5,574.5 46.5,574.5 53.5,574.5 60.5,574.5 67.5,574.5 74.5,574.5 81.5,574.5 88.5,574.5 96.5,574.5 103.5,574.5 110.5,626.5 117.5,626.5 124.5,626.5 131.5,626.5 138.5,626.5 145.5,626.5 153.5,626.5 160.5,626.5 167.5,626.5 174.5,626.5 181.5,626.5 188.5,626.5 195.5,626.5 202.5,626.5 210.5,626.5 217.5,626.5 224.5,626.5 231.5,626.5 238.5,626.5 245.5,626.5 252.5,626.5 259.5,626.5 266.5,626.5 274.5,626.5 281.5,626.5 288.5,626.5 295.5,626.5 302.5,626.5 309.5,626.5 316.5,626.5 323.5,626.5 331.5,626.5 338.5,626.5 345.5,626.5 352.5,574.5 359.5,574.5 366.5,574.5 373.5,574.5 380.5,574.5 387.5,626.5 395.5,626.5 402.5,574.5 409.5,574.5 416.5,574.5 423.5,574.5 430.5,574.5 437.5,574.5 444.5,626.5 452.5,626.5 459.5,626.5 466.5,626.5 473.5,626.5 480.5,626.5 487.5,626.5 494.5,626.5 501.5,626.5 509.5,626.5 516.5,626.5 523.5,626.5 530.5,626.5 537.5,626.5 544.5,626.5 551.5,626.5 558.5,626.5 565.5,626.5 573.5,626.5 580.5,626.5 587.5,626.5 594.5,626.5 601.5,626.5 608.5,626.5 615.5,626.5 622.5,626.5 630.5,626.5 637.5,626.5 644.5,626.5 651.5,626.5 658.5,626.5 665.5,626.5 672.5,626.5 679.5,626.5 687.5,626.5 694.5,626.5 701.5,626.5 708.5,626.5 715.5,626.5 722.5,626.5 729.5,626.5 736.5,574.5 743.5,626.5 751.5,626.5 758.5,626.5 765.5,574.5 772.5,626.5 779.5,626.5 786.5,626.5 793.5,574.5 800.5,574.5 808.5,574.5 815.5,574.5 822.5,574.5 829.5,626.5 836.5,626.5 843.5,626.5 850.5,626.5 857.5,626.5 864.5,626.5 872.5,626.5 879.5,626.5 886.5,626.5 893.5,626.5 900.5,626.5 907.5,626.5 914.5,626.5 921.5,626.5 929.5,626.5 936.5,626.5 943.5,626.5 950.5,626.5 957.5,626.5 964.5,626.5 971.5,626.5 978.5,626.5 986.5,626.5 993.5,626.5 1000.5,626.5 1007.5,626.5 1014.5,626.5 1021.5,626.5 1028.5,626.5 1035.5,626.5 1043.5,626.5 1050.5,626.5" fill="none" stroke="#00FF00" stroke-width="1" stroke-linejoin="miter" shape-rendering="crispEdges" />
<polyline points="2.0,574.5 3.5,574.5 10.5,574.5 17.5,574.5 24.5,574.5 32.5,574.5 39.5,626.5 46.5,626.5 53.5,626.5 60.5,626.5 67.5,626.5 74.5,626.5 81.5,626.5 88.5,626.5 96.5,626.5 103.5,626.5 110.5,626.5 117.5,626.5 124.5,626.5 131.5,626.5 138.5,626.5 145.5,626.5 153.5,626.5 160.5,626.5 167.5,626.5 174.5,626.5 181.5,626.5 188.5,626.5 195.5,626.5 202.5,626.5 210.5,626.5 217.5,626.5 224.5,626.5 231.5,626.5 238.5,626.5 245.5,626.5 252.5,626.5 259.5,626.5 266.5,626.5 274.5,626.5 281.5,626.5 288.5,626.5 295.5,626.5 302.5,626.5 309.5,626.5 316.5,626.5 323.5,626.5 331.5,626.5 338.5,626.5 345.5,626.5 352.5,626.5 359.5,626.5 366.5,626.5 373.5,626.5 380.5,626.5 387.5,626.5 395.5,626.5 402.5,626.5 409.5,626.5 416.5,626.5 423.5,626.5 430.5,626.5 437.5,626.5 444.5,626.5 452.5,626.5 459.5,626.5 466.5,626.5 473.5,626.5 480.5,626.5 487.5,626.5 494.5,626.5 501.5,626.5 509.5,626.5 516.5,626.5 523.5,626.5 530.5,626.5 537.5,626.5 544.5,626.5 551.5,626.5 558.5,626.5 565.5,626.5 573.5,626.5 580.5,626.5 587.5,626.5 594.5,626.5 601.5,626.5 608.5,626.5 615.5,626.5 622.5,626.5 630.5,626.5 637.5,626.5 644.5,626.5 651.5,626.5 658.5,626.5 665.5,626.5 672.5,626.5 679.5,626.5 687.5,626.5 694.5,626.5 701.5,626.5 708.5,626.5 715.5,626.5 722.5,626.5 729.5,626.5 736.5,626.5 743.5,626.5 751.5,626.5 758.5,574.5 765.5,626.5 772.5,574.5 779.5,574.5 786.5,626.5 793.5,626.5 800.5,626.5 808.5,626.5 815.5,626.5 822.5,626.5 829.5,626.5 836.5,626.5 843.5,626.5 850.5,626.5 857.5,626.5 864.5,626.5 872.5,626.5 879.5,626.5 886.5,626.5 893.5,626.5 900.5,626.5 907.5,626.5 914.5,626.5 921.5,626.5 929.5,626.5 936.5,626.5 943.5,626.5 950.5,626.5 957.5,626.5 964.5,626.5 971.5,626.5 978.5,626.5 986.5,626.5 993.5,626.5 1000.5,626.5 1007.5,626.5 1014.5,626.5 1021.5,626.5 1028.5,626.5 1035.5,626.5 1043.5,626.5 1050.5,626.5" fill="none" stroke="#FF0080" stroke-width="1" stroke-linejoin="miter" shape-rendering="crispEdges" />
<g shape-rendering="crispEdges">
<rect x="4" y="625" width="35" height="1" fill="#0000FF"/>
<rect x="3" y="626" width="30" height="1" fill="#00FF00"/>
<rect x="1" y="627" width="33" height="1" fill="#FFFFFF"/>
<rect x="1" y="622" width="2" height="8" fill="#FFFFFF"/>
<polygon points="281.5,421.5 276.0,428 287.0,428" fill="#FF0000"/>
<rect x="280" y="428" width="3" height="7" fill="#FF0000"/>
<rect x="280" y="419" width="3" height="3" fill="#FFFF00"/>
<polygon points="594.5,421.5 589.0,428 600.0,428" fill="#FF0000"/>
<rect x="593" y="428" width="3" height="7" fill="#FF0000"/>
<rect x="593" y="419" width="3" height="3" fill="#FFFF00"/>
<polygon points="352.5,555.5 347.0,562 358.0,562" fill="#FF0000"/>
<rect x="352" y="562" width="2" height="5" fill="#FF0000"/>
<polygon points="694.5,555.5 689.0,562 700.0,562" fill="#FF0000"/>
<rect x="694" y="562" width="2" height="5" fill="#FF0000"/>
<rect x="350" y="628" width="6" height="2" fill="#000"/><rect x="691" y="628" width="7" height="2" fill="#000"/>
</g>
<text x="30" y="476" fill="#FF0000" text-anchor="start" style="font-size:12px" filter="url(#sh)" >逃!</text>
<text x="329" y="476" fill="#FF0000" text-anchor="start" style="font-size:12px" filter="url(#sh)" >逃!</text>
<text x="777" y="476" fill="#FF0000" text-anchor="start" style="font-size:12px" filter="url(#sh)" >逃!</text>
<text x="1041" y="476" fill="#FF0000" text-anchor="start" style="font-size:12px" filter="url(#sh)" >逃!</text>
<text x="280.5" y="477" fill="#FFFF00" text-anchor="start" style="font-size:12px" filter="url(#sh)" >见底</text>
<text x="593.5" y="477" fill="#FFFF00" text-anchor="start" style="font-size:12px" filter="url(#sh)" >见底</text>
<text x="352.5" y="573" fill="#00C8C8" text-anchor="start" style="font-size:12px" filter="url(#sh)" >套利</text>
<text x="694" y="573" fill="#00C8C8" text-anchor="start" style="font-size:12px" filter="url(#sh)" >套利</text>
<clipPath id="cp1"><rect x="0" y="610" width="200" height="12"/></clipPath>
<text x="1" y="628" fill="#909090" text-anchor="start" style="font-size:12px" filter="url(#sh)" clip-path="url(#cp1)">用到未来数据</text>
<g shape-rendering="crispEdges">
<rect x="0" y="19" width="1127" height="1" fill="#C00000"/>
<rect x="0" y="0" width="1" height="20" fill="#C00000"/>
<rect x="23" y="0" width="1" height="19" fill="#C00000"/>
<rect x="810" y="0" width="1" height="19" fill="#C00000"/>
<rect x="845" y="0" width="1" height="19" fill="#C00000"/>
<rect x="880" y="0" width="1" height="19" fill="#C00000"/>
<rect x="915" y="0" width="1" height="19" fill="#C00000"/>
<rect x="950" y="0" width="1" height="19" fill="#C00000"/>
<rect x="985" y="0" width="1" height="19" fill="#C00000"/>
<rect x="1020" y="0" width="1" height="19" fill="#C00000"/>
<rect x="1055" y="0" width="1" height="19" fill="#C00000"/>
<rect x="1090" y="0" width="1" height="19" fill="#C00000"/>
<rect x="1075" y="20" width="1" height="611" fill="#C00000"/>
<rect x="1076" y="386" width="1" height="245" fill="#C00000"/>
<rect x="1126" y="0" width="1" height="650" fill="#C00000"/>
<rect x="1125" y="386" width="1" height="264" fill="#C00000"/>
<rect x="0" y="385" width="1075" height="1" fill="#C00000"/>
<rect x="1075" y="385" width="52" height="2" fill="#C00000"/>
<rect x="0" y="630" width="1127" height="1" fill="#C00000"/>
<rect x="0" y="646" width="1127" height="1" fill="#C00000"/>
<rect x="1076" y="399" width="50" height="1" fill="#C00000"/>
<rect x="1076" y="415" width="50" height="1" fill="#C00000"/>
<rect x="1077" y="400" width="48" height="15" fill="#000080"/>
<rect x="1127" y="25" width="3" height="1" fill="#C00000"/>
<rect x="1127" y="45" width="3" height="1" fill="#C00000"/>
<rect x="1129" y="25" width="1" height="21" fill="#C00000"/>
<rect x="1127" y="397" width="3" height="1" fill="#C00000"/>
<rect x="1127" y="418" width="3" height="1" fill="#C00000"/>
<rect x="1128" y="59" width="2" height="1" fill="#C0C0C0"/>
<rect x="1128" y="78" width="2" height="1" fill="#C0C0C0"/>
<rect x="1128" y="97" width="2" height="1" fill="#C0C0C0"/>
<rect x="1128" y="116" width="2" height="1" fill="#C0C0C0"/>
<rect x="1128" y="135" width="2" height="1" fill="#C0C0C0"/>
<rect x="1128" y="154" width="2" height="1" fill="#C0C0C0"/>
<rect x="1128" y="173" width="2" height="1" fill="#C0C0C0"/>
<rect x="1128" y="192" width="2" height="1" fill="#C0C0C0"/>
<rect x="1128" y="211" width="2" height="1" fill="#C0C0C0"/>
<rect x="1128" y="230" width="2" height="1" fill="#C0C0C0"/>
<rect x="1128" y="249" width="2" height="1" fill="#C0C0C0"/>
<rect x="1128" y="268" width="2" height="1" fill="#C0C0C0"/>
<rect x="1128" y="287" width="2" height="1" fill="#C0C0C0"/>
<rect x="1128" y="306" width="2" height="1" fill="#C0C0C0"/>
<rect x="1128" y="325" width="2" height="1" fill="#C0C0C0"/>
<rect x="1128" y="344" width="2" height="1" fill="#C0C0C0"/>
<rect x="1128" y="363" width="2" height="1" fill="#C0C0C0"/>
<rect x="1128" y="382" width="2" height="1" fill="#C0C0C0"/>
<rect x="1128" y="401" width="2" height="1" fill="#C0C0C0"/>
<rect x="1128" y="420" width="2" height="1" fill="#C0C0C0"/>
<rect x="1128" y="439" width="2" height="1" fill="#C0C0C0"/>
<rect x="1128" y="458" width="2" height="1" fill="#C0C0C0"/>
<rect x="1128" y="477" width="2" height="1" fill="#C0C0C0"/>
<rect x="1128" y="496" width="2" height="1" fill="#C0C0C0"/>
<rect x="1128" y="515" width="2" height="1" fill="#C0C0C0"/>
<rect x="1128" y="534" width="2" height="1" fill="#C0C0C0"/>
<rect x="1128" y="553" width="2" height="1" fill="#C0C0C0"/>
<rect x="1128" y="572" width="2" height="1" fill="#C0C0C0"/>
<rect x="1128" y="591" width="2" height="1" fill="#C0C0C0"/>
<rect x="1128" y="610" width="2" height="1" fill="#C0C0C0"/>
<rect x="1128" y="629" width="2" height="1" fill="#C0C0C0"/>
<rect x="1128" y="32" width="2" height="1" fill="#C0C0C0"/>
<rect x="1128" y="35" width="2" height="1" fill="#C0C0C0"/>
<rect x="1076" y="61" width="5" height="1" fill="#C00000"/>
<rect x="1076" y="76" width="2" height="1" fill="#C00000"/>
<rect x="1076" y="90" width="5" height="1" fill="#C00000"/>
<rect x="1076" y="104" width="2" height="1" fill="#C00000"/>
<rect x="1076" y="118" width="5" height="1" fill="#C00000"/>
<rect x="1076" y="132" width="2" height="1" fill="#C00000"/>
<rect x="1076" y="146" width="5" height="1" fill="#C00000"/>
<rect x="1076" y="161" width="2" height="1" fill="#C00000"/>
<rect x="1076" y="175" width="5" height="1" fill="#C00000"/>
<rect x="1076" y="189" width="2" height="1" fill="#C00000"/>
<rect x="1076" y="203" width="5" height="1" fill="#C00000"/>
<rect x="1076" y="218" width="2" height="1" fill="#C00000"/>
<rect x="1076" y="232" width="5" height="1" fill="#C00000"/>
<rect x="1076" y="246" width="2" height="1" fill="#C00000"/>
<rect x="1076" y="260" width="5" height="1" fill="#C00000"/>
<rect x="1076" y="274" width="2" height="1" fill="#C00000"/>
<rect x="1076" y="288" width="5" height="1" fill="#C00000"/>
<rect x="1076" y="303" width="2" height="1" fill="#C00000"/>
<rect x="1076" y="317" width="5" height="1" fill="#C00000"/>
<rect x="1076" y="331" width="2" height="1" fill="#C00000"/>
<rect x="1076" y="345" width="5" height="1" fill="#C00000"/>
<rect x="1077" y="420" width="4" height="1" fill="#C00000"/>
<rect x="1077" y="472" width="4" height="1" fill="#C00000"/>
<rect x="1077" y="523" width="4" height="1" fill="#C00000"/>
<rect x="1077" y="574" width="4" height="1" fill="#C00000"/>
<rect x="1077" y="446" width="2" height="1" fill="#C00000"/>
<rect x="1077" y="498" width="2" height="1" fill="#C00000"/>
<rect x="1077" y="549" width="2" height="1" fill="#C00000"/>
<rect x="1077" y="600" width="2" height="1" fill="#C00000"/>
<rect x="159" y="631" width="1" height="15" fill="#C00000"/>
<rect x="287" y="631" width="1" height="15" fill="#C00000"/>
<rect x="415" y="631" width="1" height="15" fill="#C00000"/>
<rect x="563" y="631" width="1" height="15" fill="#C00000"/>
<rect x="714" y="631" width="1" height="15" fill="#C00000"/>
<rect x="849" y="631" width="1" height="15" fill="#C00000"/>
<rect x="191" y="631" width="1" height="3" fill="#C00000"/>
<rect x="223" y="631" width="1" height="3" fill="#C00000"/>
<rect x="255" y="631" width="1" height="3" fill="#C00000"/>
<rect x="319" y="631" width="1" height="3" fill="#C00000"/>
<rect x="351" y="631" width="1" height="3" fill="#C00000"/>
<rect x="383" y="631" width="1" height="3" fill="#C00000"/>
<rect x="452" y="631" width="1" height="3" fill="#C00000"/>
<rect x="490" y="631" width="1" height="3" fill="#C00000"/>
<rect x="527" y="631" width="1" height="3" fill="#C00000"/>
<rect x="602" y="631" width="1" height="3" fill="#C00000"/>
<rect x="639" y="631" width="1" height="3" fill="#C00000"/>
<rect x="677" y="631" width="1" height="3" fill="#C00000"/>
<rect x="885" y="631" width="1" height="3" fill="#C00000"/>
<rect x="921" y="631" width="1" height="3" fill="#C00000"/>
<rect x="956" y="631" width="1" height="3" fill="#C00000"/>
<rect x="814" y="631" width="1" height="15" fill="#C00000"/>
<rect x="0" y="647" width="1" height="3" fill="#C00000"/>
<rect x="42" y="647" width="1" height="3" fill="#C00000"/>
<rect x="73" y="647" width="1" height="3" fill="#C00000"/>
<rect x="115" y="647" width="1" height="3" fill="#C00000"/>
<rect x="144" y="647" width="1" height="3" fill="#C00000"/>
<rect x="177" y="647" width="1" height="3" fill="#C00000"/>
<rect x="207" y="647" width="1" height="3" fill="#C00000"/>
<rect x="240" y="647" width="1" height="3" fill="#C00000"/>
<rect x="272" y="647" width="1" height="3" fill="#C00000"/>
<rect x="308" y="647" width="1" height="3" fill="#C00000"/>
<rect x="332" y="647" width="1" height="3" fill="#C00000"/>
<rect x="364" y="647" width="1" height="3" fill="#C00000"/>
<rect x="390" y="647" width="1" height="3" fill="#C00000"/>
<rect x="418" y="647" width="1" height="3" fill="#C00000"/>
<rect x="450" y="647" width="1" height="3" fill="#C00000"/>
<rect x="480" y="647" width="1" height="3" fill="#C00000"/>
<rect x="508" y="647" width="1" height="3" fill="#C00000"/>
<rect x="536" y="647" width="1" height="3" fill="#C00000"/>
<rect x="566" y="647" width="1" height="3" fill="#C00000"/>
<rect x="600" y="647" width="1" height="3" fill="#C00000"/>
<rect x="628" y="647" width="1" height="3" fill="#C00000"/>
<rect x="663" y="647" width="1" height="3" fill="#C00000"/>
<rect x="696" y="647" width="1" height="3" fill="#C00000"/>
<rect x="731" y="647" width="1" height="3" fill="#C00000"/>
<rect x="766" y="647" width="1" height="3" fill="#C00000"/>
<rect x="806" y="647" width="1" height="3" fill="#C00000"/>
<rect x="841" y="647" width="1" height="3" fill="#C00000"/>
<rect x="876" y="647" width="1" height="3" fill="#C00000"/>
<rect x="911" y="647" width="1" height="3" fill="#C00000"/>
<rect x="946" y="647" width="1" height="3" fill="#C00000"/>
</g>
<text x="1121" y="65.5" fill="#FF3232" text-anchor="end" style="font-size:12px" filter="url(#sh)" >4.00</text>
<text x="1121" y="94.5" fill="#FF3232" text-anchor="end" style="font-size:12px" filter="url(#sh)" >3.80</text>
<text x="1121" y="122.5" fill="#FF3232" text-anchor="end" style="font-size:12px" filter="url(#sh)" >3.60</text>
<text x="1121" y="150.5" fill="#FF3232" text-anchor="end" style="font-size:12px" filter="url(#sh)" >3.40</text>
<text x="1121" y="179.5" fill="#FF3232" text-anchor="end" style="font-size:12px" filter="url(#sh)" >3.20</text>
<text x="1121" y="207.5" fill="#FF3232" text-anchor="end" style="font-size:12px" filter="url(#sh)" >3.00</text>
<text x="1121" y="236.5" fill="#FF3232" text-anchor="end" style="font-size:12px" filter="url(#sh)" >2.80</text>
<text x="1121" y="264.5" fill="#FF3232" text-anchor="end" style="font-size:12px" filter="url(#sh)" >2.60</text>
<text x="1121" y="292.5" fill="#FF3232" text-anchor="end" style="font-size:12px" filter="url(#sh)" >2.40</text>
<text x="1121" y="321.5" fill="#FF3232" text-anchor="end" style="font-size:12px" filter="url(#sh)" >2.20</text>
<text x="1121" y="349.5" fill="#FF3232" text-anchor="end" style="font-size:12px" filter="url(#sh)" >2.00</text>
<text x="1121" y="424.5" fill="#FF3232" text-anchor="end" style="font-size:12px" filter="url(#sh)" >4.00</text>
<text x="1121" y="451.5" fill="#FF3232" text-anchor="end" style="font-size:12px" filter="url(#sh)" >3.50</text>
<text x="1121" y="476.5" fill="#FF3232" text-anchor="end" style="font-size:12px" filter="url(#sh)" >3.00</text>
<text x="1121" y="503.5" fill="#FF3232" text-anchor="end" style="font-size:12px" filter="url(#sh)" >2.50</text>
<text x="1121" y="527.5" fill="#FF3232" text-anchor="end" style="font-size:12px" filter="url(#sh)" >2.00</text>
<text x="1121" y="554.5" fill="#FF3232" text-anchor="end" style="font-size:12px" filter="url(#sh)" >1.50</text>
<text x="1121" y="578.5" fill="#FF3232" text-anchor="end" style="font-size:12px" filter="url(#sh)" >1.00</text>
<text x="1076" y="411" fill="#E0E0D0" text-anchor="start" style="font-size:12px" filter="url(#sh)" >4.11</text>
<text x="4" y="643.5" fill="#FF3232" text-anchor="start" style="font-size:12px" filter="url(#sh)" >2024年</text>
<text x="162" y="643.5" fill="#FF3232" text-anchor="start" style="font-size:12px" filter="url(#sh)" >1</text>
<text x="290" y="643.5" fill="#FF3232" text-anchor="start" style="font-size:12px" filter="url(#sh)" >2</text>
<text x="418" y="643.5" fill="#FF3232" text-anchor="start" style="font-size:12px" filter="url(#sh)" >3</text>
<text x="566" y="643.5" fill="#FF3232" text-anchor="start" style="font-size:12px" filter="url(#sh)" >4</text>
<text x="717" y="643.5" fill="#FF3232" text-anchor="start" style="font-size:12px" filter="url(#sh)" >5</text>
<text x="852" y="643.5" fill="#FF3232" text-anchor="start" style="font-size:12px" filter="url(#sh)" >6</text>
<rect x="737" y="631" width="77" height="15" fill="#000080" shape-rendering="crispEdges"/>
<text x="739" y="643" fill="#E8E8E8" text-anchor="start" style="font-size:12px" filter="url(#sh)" >2025/05/09/五</text>
<clipPath id="cp2"><rect x="0" y="649" width="1130" height="1"/></clipPath>
<text x="7" y="660" fill="#FFFFFF" text-anchor="start" style="font-size:12px" filter="url(#sh)" clip-path="url(#cp2)">指标</text>
<text x="49" y="660" fill="#FFFFFF" text-anchor="start" style="font-size:12px" filter="url(#sh)" clip-path="url(#cp2)">1</text>
<text x="845" y="660" fill="#54FFFF" text-anchor="start" style="font-size:12px" filter="url(#sh)" clip-path="url(#cp2)">指标</text>
<text x="28" y="13.5" fill="#C0C0C0" text-anchor="start" style="font-size:12px" filter="url(#sh)" >分时</text>
<text x="61" y="13.5" fill="#C0C0C0" text-anchor="start" style="font-size:12px" filter="url(#sh)" >1分钟</text>
<text x="100" y="13.5" fill="#C0C0C0" text-anchor="start" style="font-size:12px" filter="url(#sh)" >5分钟</text>
<text x="139" y="13.5" fill="#C0C0C0" text-anchor="start" style="font-size:12px" filter="url(#sh)" >15分钟</text>
<text x="185" y="13.5" fill="#C0C0C0" text-anchor="start" style="font-size:12px" filter="url(#sh)" >30分钟</text>
<text x="231" y="13.5" fill="#C0C0C0" text-anchor="start" style="font-size:12px" filter="url(#sh)" >60分钟</text>
<text x="278" y="13.5" fill="#54FFFF" text-anchor="start" style="font-size:12px" filter="url(#sh)" >日线</text>
<text x="312" y="13.5" fill="#C0C0C0" text-anchor="start" style="font-size:12px" filter="url(#sh)" >周线</text>
<text x="345" y="13.5" fill="#C0C0C0" text-anchor="start" style="font-size:12px" filter="url(#sh)" >月线</text>
<text x="378" y="13.5" fill="#C0C0C0" text-anchor="start" style="font-size:12px" filter="url(#sh)" >多周期</text>
<text x="422" y="13.5" fill="#C0C0C0" text-anchor="start" style="font-size:12px" filter="url(#sh)" >更多<tspan dx="3">&gt;</tspan></text>
<text x="827.5" y="13.5" fill="#C0C0C0" text-anchor="middle" style="font-size:12px" filter="url(#sh)" >复权</text>
<text x="862.5" y="13.5" fill="#C0C0C0" text-anchor="middle" style="font-size:12px" filter="url(#sh)" >叠加</text>
<text x="897.5" y="13.5" fill="#C0C0C0" text-anchor="middle" style="font-size:12px" filter="url(#sh)" >多股</text>
<text x="932.5" y="13.5" fill="#C0C0C0" text-anchor="middle" style="font-size:12px" filter="url(#sh)" >统计</text>
<text x="967.5" y="13.5" fill="#C0C0C0" text-anchor="middle" style="font-size:12px" filter="url(#sh)" >画线</text>
<text x="1002.5" y="13.5" fill="#C0C0C0" text-anchor="middle" style="font-size:12px" filter="url(#sh)" >F10</text>
<text x="1037.5" y="13.5" fill="#C0C0C0" text-anchor="middle" style="font-size:12px" filter="url(#sh)" >标记</text>
<text x="1072.5" y="13.5" fill="#C0C0C0" text-anchor="middle" style="font-size:12px" filter="url(#sh)" >+自选</text>
<text x="1108" y="13.5" fill="#C0C0C0" text-anchor="middle" style="font-size:12px" filter="url(#sh)" >返回</text>
<rect x="5.5" y="3.5" width="11" height="10" rx="2.5" fill="none" stroke="#808080"/><rect x="12" y="5" width="3" height="7" fill="#909090"/>
<text x="3" y="33.5" fill="#C0C0C0" text-anchor="start" style="font-size:12px" filter="url(#sh)" >华夏幸福(日线.前复权)</text>
<circle cx="134" cy="29" r="6" fill="#707070"/><polyline points="130.5,27.5 134,31 137.5,27.5" fill="none" stroke="#202020" stroke-width="1.5"/>
<polygon points="1047.5,24.5 1052.5,29.5 1047.5,34.5 1042.5,29.5" fill="none" stroke="#909090"/>
<rect x="1060.5" y="24.5" width="11" height="10" rx="2" fill="none" stroke="#909090"/><rect x="1066" y="26" width="4" height="7" fill="#909090"/>
<text x="54" y="50" fill="#C0C0C0" text-anchor="start" style="font-size:12px" filter="url(#sh)" >4.15</text>
<g shape-rendering="crispEdges"><rect x="39" y="39" width="1" height="4" fill="#C0C0C0"/><rect x="39" y="39" width="4" height="1" fill="#C0C0C0"/><polyline points="40,40.5 43,41.5 46,42.5 49,43.5 51.5,44.5" fill="none" stroke="#C0C0C0"/><polyline points="40,42.5 42,44.5" fill="none" stroke="#C0C0C0"/></g>
<text x="615" y="372" fill="#C0C0C0" text-anchor="start" style="font-size:12px" filter="url(#sh)" >1.85</text>
<polyline points="613,366.5 601.5,366.5 M601.5,366.5" fill="none" stroke="#C0C0C0"/><polyline points="605,363.5 601.5,366.5 605,369.5" fill="none" stroke="#C0C0C0"/>
<rect x="195" y="371" width="13" height="13" fill="#800000" shape-rendering="crispEdges"/><polygon points="206,371 208,371 208,373" fill="#000"/>
<text x="195.5" y="382" fill="#FFFFFF" text-anchor="start" style="font-size:12px" filter="url(#sh)" >增</text>
<rect x="701" y="371" width="13" height="13" fill="#003878" shape-rendering="crispEdges"/><polygon points="712,371 714,371 714,373" fill="#000"/>
<text x="701.5" y="382" fill="#FFFFFF" text-anchor="start" style="font-size:12px" filter="url(#sh)" >财</text>
<rect x="786" y="371" width="13" height="13" fill="#007800" shape-rendering="crispEdges"/><polygon points="797,371 799,371 799,373" fill="#000"/>
<text x="786.5" y="382" fill="#FFFFFF" text-anchor="start" style="font-size:12px" filter="url(#sh)" >跌</text>
<rect x="1035" y="371" width="13" height="13" fill="#800000" shape-rendering="crispEdges"/><polygon points="1046,371 1048,371 1048,373" fill="#000"/>
<text x="1035.5" y="382" fill="#FFFFFF" text-anchor="start" style="font-size:12px" filter="url(#sh)" >涨</text>
<rect x="1047" y="371" width="13" height="13" fill="#A05000" shape-rendering="crispEdges"/><polygon points="1058,371 1060,371 1060,373" fill="#000"/>
<text x="1047.5" y="382" fill="#FFFFFF" text-anchor="start" style="font-size:12px" filter="url(#sh)" >榜</text>
<circle cx="8" cy="394" r="5.5" fill="#707070"/><polyline points="5,392.5 8,395.5 11,392.5" fill="none" stroke="#202020" stroke-width="1.5"/>
<text x="19" y="398" fill="#C0C0C0" text-anchor="start" style="font-size:12px" filter="url(#sh)" >股朋指标网</text>
<text x="83" y="398" fill="#FFFF00" text-anchor="start" style="font-size:12px" filter="url(#sh)" >见底: 0.00</text>
<text x="143" y="398" fill="#FFFFFF" text-anchor="start" style="font-size:12px" filter="url(#sh)" >狙击: 0.00</text>
<text x="202" y="398" fill="#FF0000" text-anchor="start" style="font-size:12px" filter="url(#sh)" >逃命: 0.00</text>
<text x="260" y="398" fill="#FFFF00" text-anchor="start" style="font-size:12px" filter="url(#sh)" >金: 3.55</text>
<text x="306" y="398" fill="#FF00FF" text-anchor="start" style="font-size:12px" filter="url(#sh)" >阴阳: 3.17</text>
<text x="366" y="398" fill="#0000FF" text-anchor="start" style="font-size:12px" filter="url(#sh)" >机构介入: 0.00</text>
<text x="448" y="398" fill="#FFFFFF" text-anchor="start" style="font-size:12px" filter="url(#sh)" >无庄控盘: 0.00</text>
<text x="532" y="398" fill="#FFFF00" text-anchor="start" style="font-size:12px" filter="url(#sh)" >有庄控盘: 1.00</text>
<text x="615" y="398" fill="#00FF00" text-anchor="start" style="font-size:12px" filter="url(#sh)" >主力出货: 0.00</text>
<text x="698" y="398" fill="#FF0080" text-anchor="start" style="font-size:12px" filter="url(#sh)" >高度控盘: 0.00</text>
<rect x="971" y="600" width="159" height="50" fill="#3A3434"/>
<text x="1051" y="622" fill="#FFFFFF" text-anchor="middle" style="font-family:'Liberation Sans','Noto Sans CJK SC',sans-serif;font-size:18px;font-weight:bold">指标公式网</text>
<text x="1053" y="641.5" fill="#FFFFFF" text-anchor="middle" style="font-size:16px"  letter-spacing="0.23">www.zbgs3.com</text>
</svg>
</body></html>
